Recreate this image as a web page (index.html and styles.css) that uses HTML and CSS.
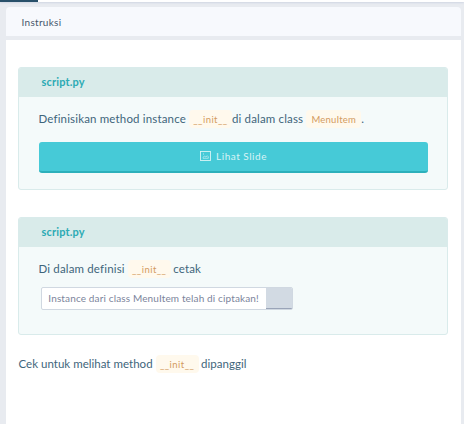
FILE: index.html
```html
<!DOCTYPE html>
<html lang="id">
<head>
<meta charset="utf-8">
<title>Instruksi</title>
<link rel="stylesheet" href="styles.css">
</head>
<body>
<div class="topbar"><div class="topbar-active"></div></div>
<header class="tab">Instruksi</header>
<main class="panel">
  <section class="card">
    <h2 class="card-title">script.py</h2>
    <div class="card-body">
      <p class="line"><span>Definisikan method instance</span><code class="code">__init__</code><span>di dalam class</span><code class="code menu-item">MenuItem</code><span>.</span></p>
      <button class="slide-button">
        <svg class="icon" viewBox="0 0 11 10" fill="none" stroke="currentColor"><rect x=".5" y=".5" width="10" height="9" stroke-width=".9"/><path d="M3 7.3h5.3V5.8L7.2 4.7 6 6 4.2 5.2 3 6.3z" stroke-width=".6"/><path d="M3 3h1" stroke-width=".8"/></svg>
        <span>Lihat Slide</span>
      </button>
    </div>
  </section>
  <section class="card card-second">
    <h2 class="card-title">script.py</h2>
    <div class="card-body">
      <p class="line"><span>Di dalam definisi</span><code class="code">__init__</code><span class="after">cetak</span></p>
      <div class="copy-field"><span class="copy-text">Instance dari class MenuItem telah di ciptakan!</span><span class="copy-button"></span></div>
    </div>
  </section>
  <p class="line footer-line"><span>Cek untuk melihat method</span><code class="code">__init__</code><span class="after">dipanggil</span></p>
</main>
</body>
</html>
```
FILE: styles.css
```css
* { box-sizing: border-box; }
body {
  margin: 0;
  height: 424px;
  overflow: hidden;
  background: #e8ebf0;
  color: #3e657b;
  font-family: Lato, sans-serif;
  display: flex;
  flex-direction: column;
}
.topbar {
  height: 2px;
  flex: none;
  background: #fff;
  box-shadow: 0 1px 2px #cfd5e2;
}
.topbar-active { width: 38px; height: 2px; background: #28506a; }
.tab {
  flex: none;
  height: 29px;
  margin: 5px 3px 4px 6px;
  padding-left: 15.5px;
  background: #f7f9fd;
  border-radius: 4px 4px 0 0;
  font-size: 10px;
  line-height: 31px;
  letter-spacing: .3px;
  color: #46566b;
}
.panel {
  flex: 1;
  margin: 0 3px 0 6px;
  padding: 27px 13px 0 12px;
  background: #fff;
}
.card {
  height: 123px;
  border: 1px solid #d9ebeb;
  border-radius: 3px;
  background: #f4fafa;
  overflow: hidden;
}
.card-second { height: 118px; margin-top: 27px; }
.card-title {
  margin: 0;
  height: 29px;
  padding-left: 22.5px;
  background: #d9ebea;
  color: #2caab4;
  font-size: 11px;
  line-height: 27px;
  font-weight: 700;
  letter-spacing: .15px;
}
.card-body { padding: 13px 19px 0 20px; }
.line {
  display: flex;
  align-items: center;
  height: 18px;
  margin: 0 0 0 -.5px;
  font-size: 11.5px;
  line-height: 18px;
  letter-spacing: .16px;
  white-space: pre;
}
.code {
  flex: none;
  width: 43px;
  height: 18px;
  margin-left: 3px;
  border-radius: 4px;
  background: #fff9ed;
  color: #d39b5f;
  font: 9.5px/19px Lato, sans-serif;
  letter-spacing: .45px;
  text-align: center;
}
.after { margin-left: 2.5px; }
.menu-item { width: 55px; letter-spacing: .2px; }
.slide-button {
  display: flex;
  align-items: center;
  justify-content: center;
  gap: 5px;
  width: 100%;
  height: 30.5px;
  margin: 14px 0 0;
  padding: 0;
  border: 0;
  border-bottom: 2px solid #2db0bb;
  border-radius: 3px;
  background: #46cad7;
  color: #d8f4f6;
  font: 10px/28px Lato, sans-serif;
  letter-spacing: .52px;
}
.icon { width: 11px; height: 10px; }
.copy-field {
  display: flex;
  width: 252px;
  height: 23px;
  margin: 9px 0 0 2px;
  border: 1px solid #d0d8e1;
  border-radius: 2px;
  background: #fff;
  overflow: hidden;
}
.copy-text {
  width: 224px;
  padding-left: 6.3px;
  color: #7b849b;
  font-size: 10px;
  line-height: 20px;
  letter-spacing: .14px;
  white-space: nowrap;
}
.copy-button { flex: 1; background: #d2dae3; border-bottom: 1px solid #9aa4b8; }
.footer-line { margin: 20px 0 0 .5px; letter-spacing: .02px; }
```
